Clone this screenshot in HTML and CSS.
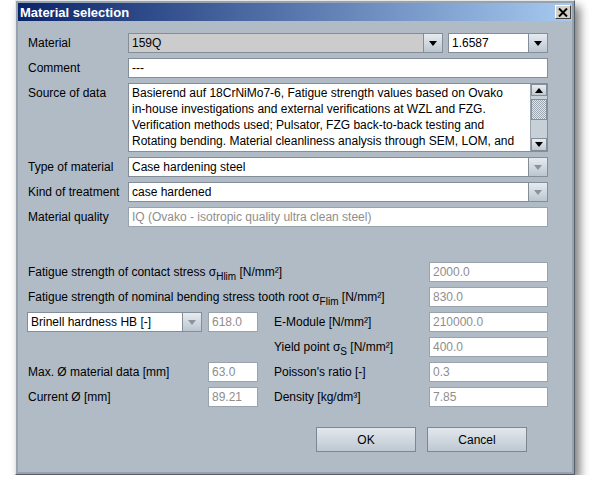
FILE: index.html
```html
<!DOCTYPE html>
<html>
<head>
<meta charset="utf-8">
<title>Material selection</title>
<link rel="stylesheet" href="styles.css">
</head>
<body>
<div class="window">
  <div class="titlebar">
    <span class="title">Material selection</span>
    <span class="close"><svg width="10" height="9" viewBox="0 0 10 9"><path d="M1 0.5 L9 8.5 M9 0.5 L1 8.5" stroke="#000" stroke-width="2" fill="none"/></svg></span>
  </div>
  <div class="content">
    <div class="top-grid">
      <div class="label">Material</div>
      <div class="mat-row">
        <div class="combo combo-main gray"><span class="ctext">159Q</span><span class="abtn"><span class="tri"></span></span></div>
        <div class="combo combo-code"><span class="ctext">1.6587</span><span class="abtn"><span class="tri"></span></span></div>
      </div>
      <div class="label">Comment</div>
      <div class="field">---</div>
      <div class="label label-top">Source of data</div>
      <div class="textarea">
        <div class="tatext">
          <div>Basierend auf 18CrNiMo7-6, Fatigue strength values based on Ovako</div>
          <div>in-house investigations and external verifications at WZL and FZG.</div>
          <div>Verification methods used; Pulsator, FZG back-to-back testing and</div>
          <div>Rotating bending. Material cleanliness analysis through SEM, LOM, and</div>
        </div>
        <div class="scrollbar">
          <div class="sbtn"><span class="tri-up"></span></div>
          <div class="track"><div class="thumb"></div></div>
          <div class="sbtn sbtn-down"><span class="tri"></span></div>
        </div>
      </div>
      <div class="label">Type of material</div>
      <div class="combo"><span class="ctext">Case hardening steel</span><span class="abtn"><span class="tri dis"></span></span></div>
      <div class="label">Kind of treatment</div>
      <div class="combo"><span class="ctext">case hardened</span><span class="abtn"><span class="tri dis"></span></span></div>
      <div class="label">Material quality</div>
      <div class="field disabled">IQ (Ovako - isotropic quality ultra clean steel)</div>
    </div>

    <div class="bottom-grid">
      <div class="label span3">Fatigue strength of contact stress σ<sub>Hlim</sub> [N/mm²]</div>
      <div class="field disabled c4">2000.0</div>

      <div class="label span3">Fatigue strength of nominal bending stress tooth root σ<sub>Flim</sub> [N/mm²]</div>
      <div class="field disabled c4">830.0</div>

      <div class="combo c1"><span class="ctext">Brinell hardness HB [-]</span><span class="abtn"><span class="tri dis"></span></span></div>
      <div class="field disabled c2">618.0</div>
      <div class="label c3">E-Module [N/mm²]</div>
      <div class="field disabled c4">210000.0</div>

      <div class="label c3 r4">Yield point σ<sub>S</sub> [N/mm²]</div>
      <div class="field disabled c4">400.0</div>

      <div class="label c1">Max. Ø material data [mm]</div>
      <div class="field disabled c2">63.0</div>
      <div class="label c3">Poisson's ratio [-]</div>
      <div class="field disabled c4">0.3</div>

      <div class="label c1">Current Ø [mm]</div>
      <div class="field disabled c2">89.21</div>
      <div class="label c3">Density [kg/dm³]</div>
      <div class="field disabled c4">7.85</div>
    </div>

    <div class="buttons">
      <button class="btn">OK</button>
      <button class="btn">Cancel</button>
    </div>
  </div>
</div>
</body>
</html>
```

FILE: styles.css
```css
html, body {
  margin: 0;
  padding: 0;
  background: #ffffff;
}
body {
  font-family: "Liberation Sans", Arial, sans-serif;
  font-size: 12px;
  color: #000;
}
.window {
  margin-left: 15px;
  width: 560px;
  height: 475px;
  box-sizing: border-box;
  border: 1px solid;
  border-color: #e4e8ec #55606b #55606b #e4e8ec;
  padding: 2px;
  background: #97a2ad;
  box-shadow: 5px 6px 9px rgba(0, 0, 0, 0.5);
  display: flex;
  flex-direction: column;
}
.titlebar {
  height: 18px;
  flex: none;
  background: linear-gradient(to right, #0a246a, #a6caf0);
  display: flex;
  align-items: center;
  justify-content: space-between;
  padding: 0 1px 0 2px;
}
.title {
  color: #fff;
  font-weight: bold;
  font-size: 13px;
}
.close {
  width: 16px;
  height: 14px;
  box-sizing: border-box;
  background: #d4d0c8;
  border: 1px solid;
  border-color: #ffffff #404040 #404040 #ffffff;
  display: flex;
  align-items: center;
  justify-content: center;
}
.content {
  flex: 1;
  background: #b0bbc6;
  padding: 12px 24px 0 9px;
  display: flex;
  flex-direction: column;
}
.top-grid {
  display: grid;
  grid-template-columns: 101px 420px;
  grid-template-rows: 20px 20px 69px 20px 20px 20px;
  row-gap: 5px;
}
.label {
  padding-left: 1px;
  line-height: 20px;
  height: 20px;
  white-space: nowrap;
}
.label-top {
  align-self: start;
}
.label sub {
  font-size: 10px;
  vertical-align: -4px;
  line-height: 0;
}
.field {
  box-sizing: border-box;
  height: 20px;
  background: #fff;
  border: 1px solid #838e99;
  padding-left: 3px;
  line-height: 18px;
  white-space: nowrap;
  overflow: hidden;
}
.field.disabled {
  color: #8e8e8e;
  border-color: #98a3ae;
}
.mat-row {
  display: flex;
  gap: 5px;
}
.combo {
  box-sizing: border-box;
  height: 20px;
  display: flex;
  border: 1px solid #838e99;
  background: #fff;
}
.combo-main {
  width: 315px;
}
.combo-code {
  width: 100px;
}
.combo.gray {
  background: #cccccc;
}
.ctext {
  flex: 1;
  padding-left: 3px;
  line-height: 18px;
  white-space: nowrap;
  overflow: hidden;
}
.abtn {
  width: 18px;
  flex: none;
  border-left: 1px solid #838e99;
  background: linear-gradient(to bottom, #e6ebf0, #bcc6d0);
  display: flex;
  align-items: center;
  justify-content: center;
}
.tri {
  width: 0;
  height: 0;
  border-left: 4px solid transparent;
  border-right: 4px solid transparent;
  border-top: 5px solid #000;
}
.tri.dis {
  border-top-color: #8a939c;
}
.tri-up {
  width: 0;
  height: 0;
  border-left: 4px solid transparent;
  border-right: 4px solid transparent;
  border-bottom: 5px solid #000;
}
.textarea {
  height: 69px;
  box-sizing: border-box;
  border: 1px solid #838e99;
  background: #fff;
  display: flex;
  overflow: hidden;
}
.tatext {
  flex: 1;
  padding: 1px 0 0 3px;
  line-height: 16px;
  white-space: nowrap;
  overflow: hidden;
}
.scrollbar {
  width: 16px;
  flex: none;
  display: flex;
  flex-direction: column;
  background: #c7cfd7;
  border-left: 1px solid #9aa5b0;
}
.sbtn {
  height: 12px;
  flex: none;
  box-sizing: border-box;
  border: 1px solid #838e99;
  background: linear-gradient(to bottom, #e9edf1, #c0c9d2);
  display: flex;
  align-items: center;
  justify-content: center;
}
.sbtn-down {
  height: 13px;
}
.track {
  flex: 1;
  padding-top: 3px;
}
.thumb {
  height: 21px;
  box-sizing: border-box;
  border: 1px solid #838e99;
  background-color: #b9c2cb;
  background-image: repeating-conic-gradient(#e2e6ea 0 25%, #9ba5af 0 50%);
  background-size: 2px 2px;
}
.bottom-grid {
  margin-top: 35px;
  display: grid;
  grid-template-columns: 181px 65px 156px 119px;
  grid-auto-rows: 20px;
  row-gap: 5px;
}
.span3 {
  grid-column: 1 / 4;
}
.c1 {
  grid-column: 1;
}
.combo.c1 {
  width: 175px;
}
.c2 {
  grid-column: 2;
  width: 50px;
}
.c3 {
  grid-column: 3;
}
.c4 {
  grid-column: 4;
}
.r4 {
  grid-row: 4;
}
.buttons {
  margin-top: 20px;
  display: flex;
  justify-content: flex-end;
  gap: 11px;
  padding-right: 21px;
}
.btn {
  width: 100px;
  height: 25px;
  box-sizing: border-box;
  font-family: "Liberation Sans", Arial, sans-serif;
  font-size: 12px;
  color: #000;
  border: 1px solid #7c8792;
  background: linear-gradient(to bottom, #e2e7ec, #bec8d2);
  padding: 0;
}
```
